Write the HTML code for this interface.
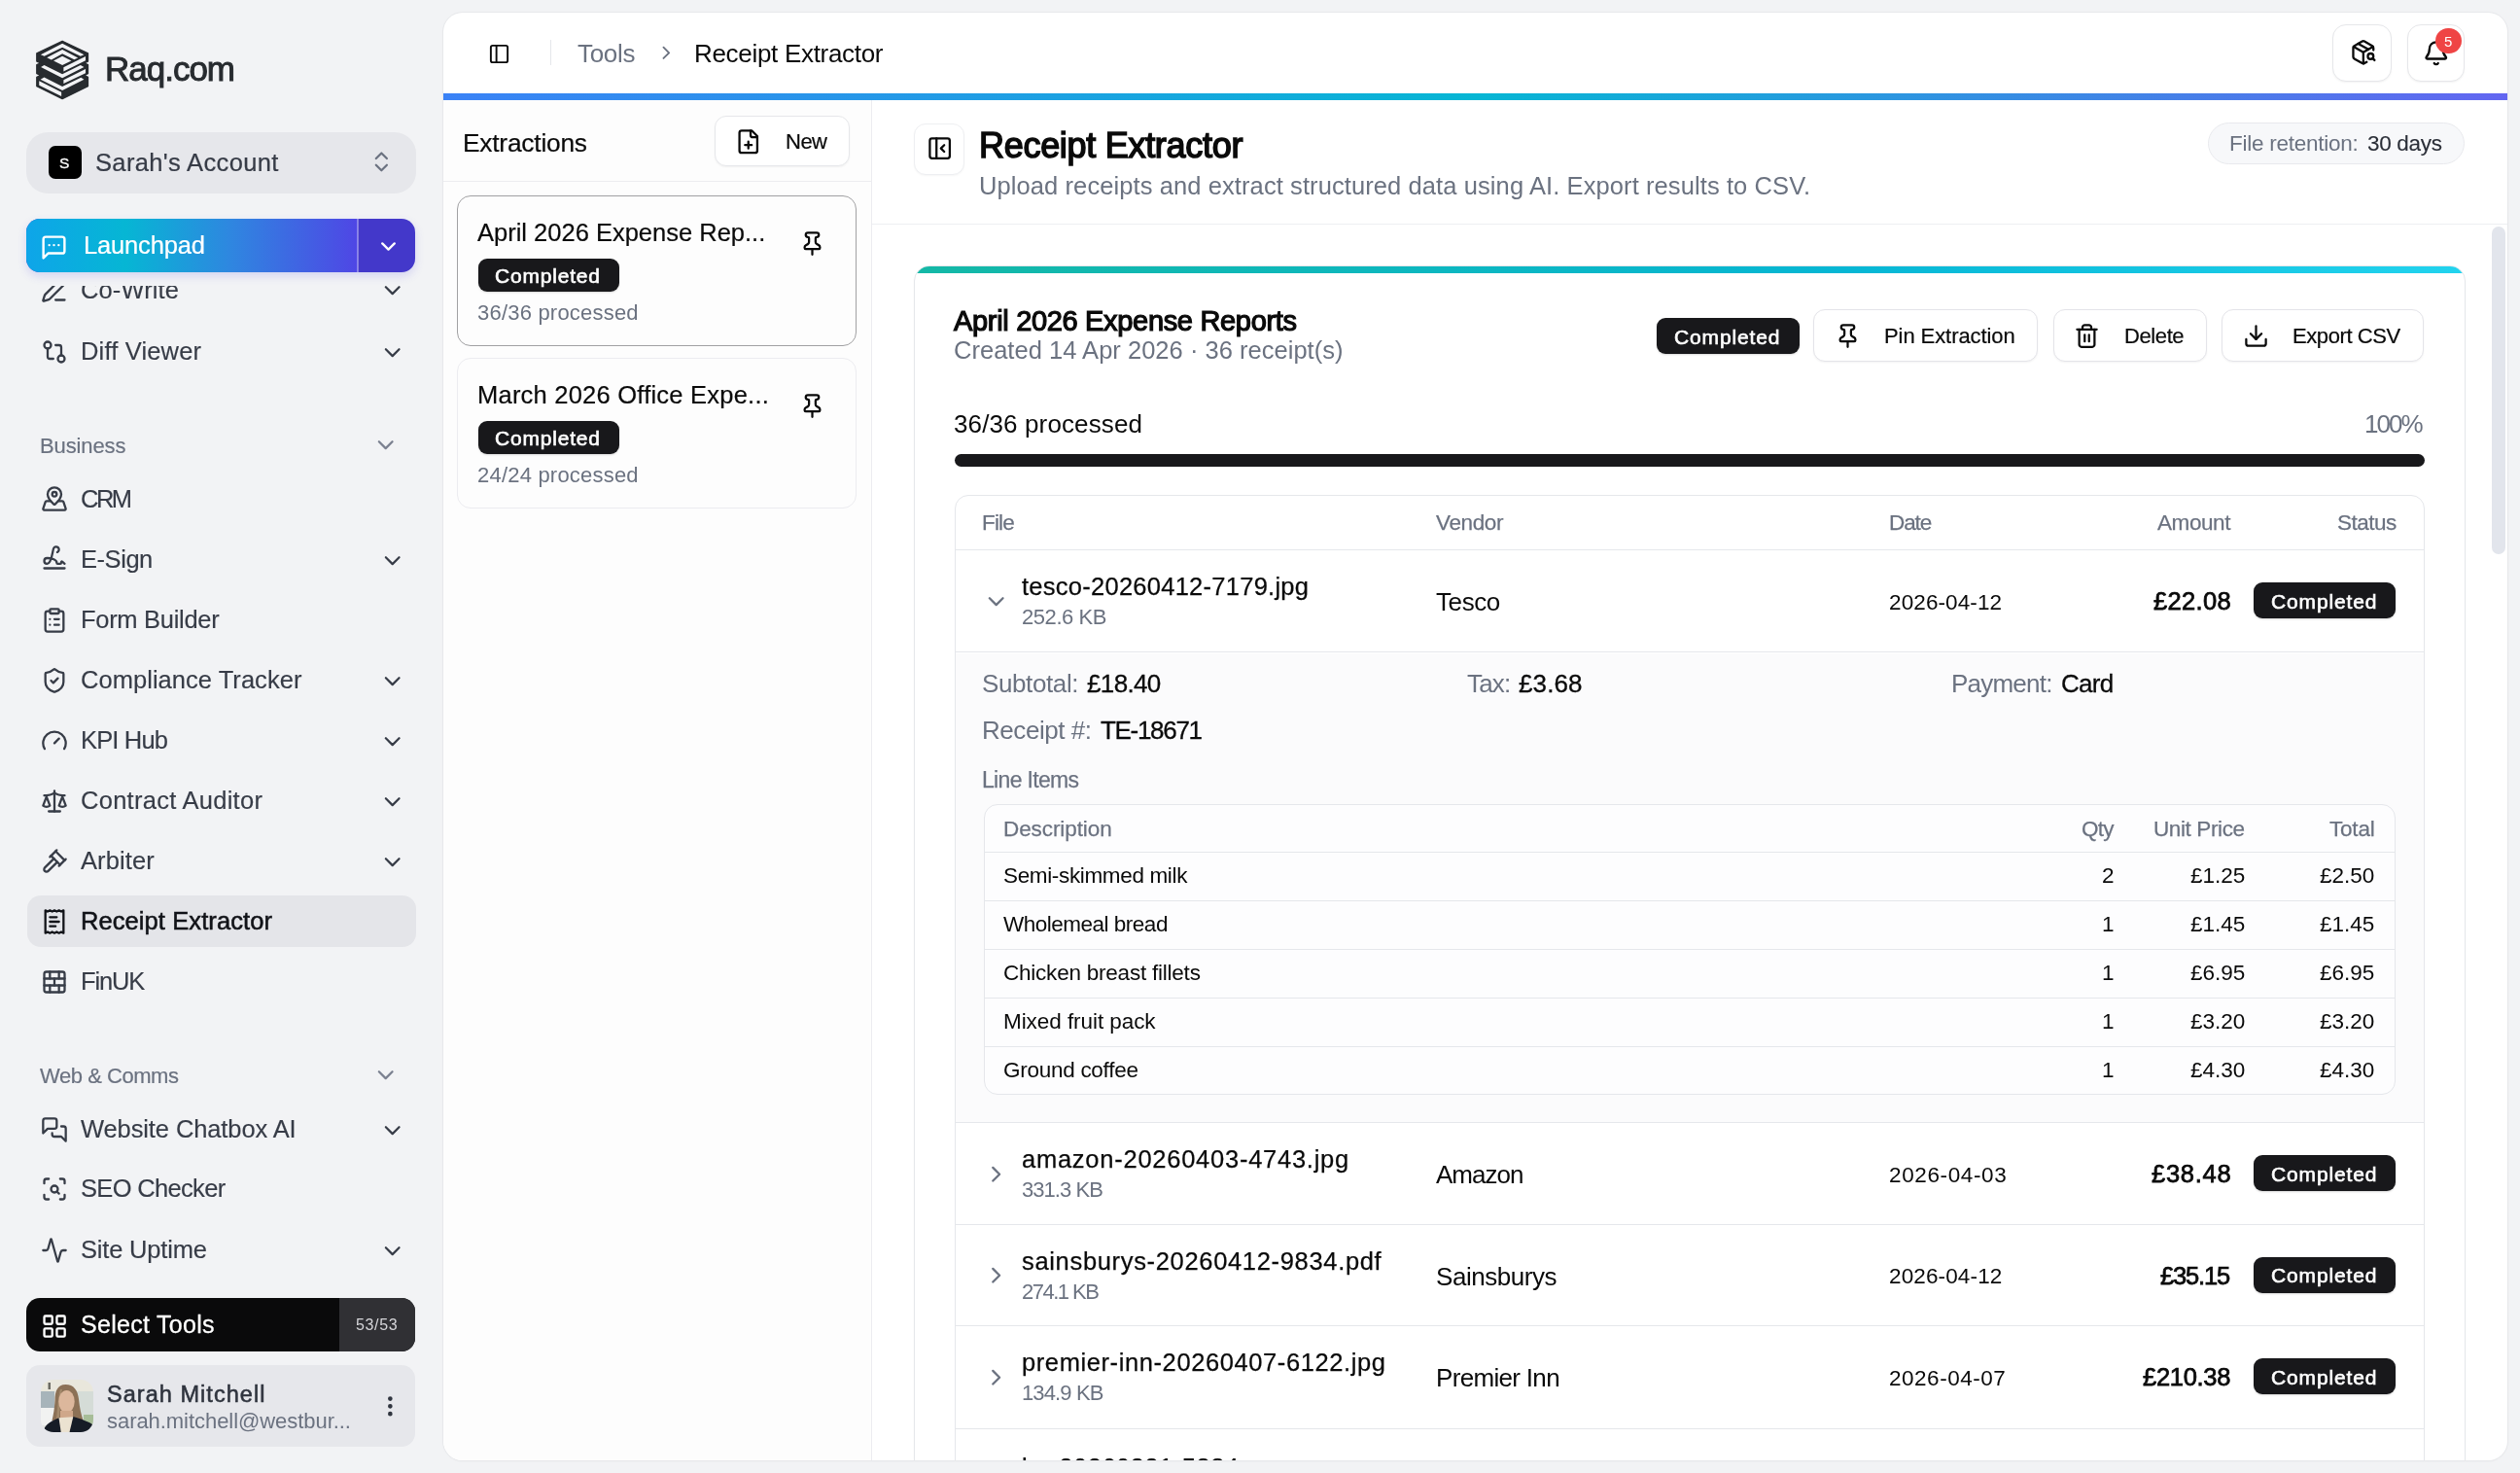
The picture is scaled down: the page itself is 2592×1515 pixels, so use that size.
<!DOCTYPE html>
<html><head><meta charset="utf-8"><title>Receipt Extractor</title>
<style>
html,body{margin:0;padding:0;}
body{width:2592px;height:1515px;overflow:hidden;position:relative;background:#f2f3f5;font-family:"Liberation Sans", sans-serif;}
</style></head><body>
<svg style="position:absolute;left:34px;top:38px" width="60" height="66" viewBox="0 0 1339 1473">
<path fill="#272b2f" stroke="#272b2f" stroke-width="30" stroke-linejoin="round" d="M672 95 L1260 375 L1260 560 L1175 600 L1260 640 L1260 840 L1175 880 L1260 925 L1260 1130 L672 1420 L85 1130 L85 925 L175 880 L85 840 L85 640 L175 600 L85 560 L85 375 Z"/>
<g fill="#f2f3f5">
<path d="M175 405 L672 150 L1170 405 L1088 443 L672 240 L258 443 Z"/>
<path d="M318 472 L672 290 L1030 478 L945 520 L672 385 L420 522 Z"/>
<path d="M470 545 L672 440 L880 545 L672 650 Z"/>
<path d="M700 700 L1205 445 L1205 540 L700 790 Z"/>
<path d="M180 690 L255 645 L672 855 L1090 645 L1170 690 L672 945 Z"/>
<path d="M700 985 L1205 735 L1205 830 L700 1072 Z"/>
<path d="M170 975 L255 925 L672 1140 L1100 930 L1170 975 L672 1230 Z"/>
<path d="M140 1010 L650 1265 L650 1360 L140 1110 Z"/>
</g></svg>
<span id="t0" style="position:absolute;top:52.95px;font-size:35px;line-height:35px;color:#272b2f;white-space:nowrap;will-change:transform;letter-spacing:-1.010px;-webkit-text-stroke:0.95px #272b2f;left:107.80px;">Raq.com</span>
<div style="position:absolute;left:27.00px;top:136.30px;width:400.50px;height:62.90px;background:#e6e7eb;border-radius:22px;"></div>
<div style="position:absolute;left:49.50px;top:150.00px;width:34.30px;height:34.20px;background:#000;border-radius:7px;"></div>
<span id="t1" style="position:absolute;top:159.93px;font-size:15.5px;line-height:15.5px;color:#fff;white-space:nowrap;will-change:transform;-webkit-text-stroke:0.30px #fff;left:61.43px;">S</span>
<span id="t2" style="position:absolute;top:154.93px;font-size:25.5px;line-height:25.5px;color:#373c47;white-space:nowrap;will-change:transform;letter-spacing:0.344px;-webkit-text-stroke:0.22px #373c47;left:98.00px;">Sarah's Account</span>
<svg style="position:absolute;left:378.75px;top:153.35px;" width="26.70" height="26.70" viewBox="0 0 24 24" fill="none" stroke="#6b7280" stroke-width="2" stroke-linecap="round" stroke-linejoin="round"><path d="m7 15 5 5 5-5"/><path d="m7 9 5-5 5 5"/></svg>
<div style="position:absolute;left:27.00px;top:225.00px;width:400.00px;height:55.00px;border-radius:14px;overflow:hidden;box-shadow:0 4px 10px rgba(79,70,229,0.18);background:#4338ca;"><div style="position:absolute;left:0;top:0;width:340.5px;height:55px;background:linear-gradient(90deg,#0ea5e9 0%,#06b6d4 30%,#2f86e0 62%,#4f46e5 100%);"></div><div style="position:absolute;left:340px;top:0;width:1.5px;height:55px;background:rgba(255,255,255,0.35)"></div></div>
<svg style="position:absolute;left:41.00px;top:239.90px;" width="29.00" height="29.00" viewBox="0 0 24 24" fill="none" stroke="#fff" stroke-width="2" stroke-linecap="round" stroke-linejoin="round"><path d="M21 15a2 2 0 0 1-2 2H7l-4 4V5a2 2 0 0 1 2-2h14a2 2 0 0 1 2 2z"/><path d="M8 10h.01"/><path d="M12 10h.01"/><path d="M16 10h.01"/></svg>
<span id="t3" style="position:absolute;top:240.43px;font-size:25.5px;line-height:25.5px;color:#fff;white-space:nowrap;will-change:transform;letter-spacing:-0.152px;-webkit-text-stroke:0.22px #fff;left:86.00px;">Launchpad</span>
<svg style="position:absolute;left:386.50px;top:241.00px;" width="25.00" height="25.00" viewBox="0 0 24 24" fill="none" stroke="#fff" stroke-width="2.2" stroke-linecap="round" stroke-linejoin="round"><path d="m6 9 6 6 6-6"/></svg>
<div style="position:absolute;left:0;top:294px;width:440px;height:1028px;overflow:hidden">
<div style="position:absolute;left:27.70px;top:626.70px;width:400.00px;height:53.30px;background:#e4e5e9;border-radius:14px;"></div>
<svg style="position:absolute;left:42.00px;top:-9.70px;" width="28.00" height="28.00" viewBox="0 0 24 24" fill="none" stroke="#373c47" stroke-width="1.95" stroke-linecap="round" stroke-linejoin="round"><path d="M13 21h8"/><path d="M21.174 6.812a1 1 0 0 0-3.986-3.987L3.842 16.174a2 2 0 0 0-.5.83l-1.321 4.352a.5.5 0 0 0 .623.622l4.353-1.32a2 2 0 0 0 .83-.497z"/></svg>
<span id="t4" style="position:absolute;top:-8.18px;font-size:25.5px;line-height:25.5px;color:#373c47;white-space:nowrap;will-change:transform;letter-spacing:0.125px;-webkit-text-stroke:0.15px #373c47;left:82.80px;">Co-Write</span>
<svg style="position:absolute;left:390.30px;top:-8.60px;" width="27.40" height="27.40" viewBox="0 0 24 24" fill="none" stroke="#373c47" stroke-width="1.95" stroke-linecap="round" stroke-linejoin="round"><path d="m6 9 6 6 6-6"/></svg>
<svg style="position:absolute;left:42.00px;top:53.60px;" width="28.00" height="28.00" viewBox="0 0 24 24" fill="none" stroke="#373c47" stroke-width="1.95" stroke-linecap="round" stroke-linejoin="round"><circle cx="18" cy="18" r="3"/><circle cx="6" cy="6" r="3"/><path d="M13 6h3a2 2 0 0 1 2 2v7"/><path d="M11 18H8a2 2 0 0 1-2-2V9"/></svg>
<span id="t5" style="position:absolute;top:55.12px;font-size:25.5px;line-height:25.5px;color:#373c47;white-space:nowrap;will-change:transform;letter-spacing:0.164px;-webkit-text-stroke:0.15px #373c47;left:82.80px;">Diff Viewer</span>
<svg style="position:absolute;left:390.30px;top:54.70px;" width="27.40" height="27.40" viewBox="0 0 24 24" fill="none" stroke="#373c47" stroke-width="1.95" stroke-linecap="round" stroke-linejoin="round"><path d="m6 9 6 6 6-6"/></svg>
<svg style="position:absolute;left:42.00px;top:205.40px;" width="28.00" height="28.00" viewBox="0 0 24 24" fill="none" stroke="#373c47" stroke-width="1.95" stroke-linecap="round" stroke-linejoin="round"><path d="M18 8c0 3.613-3.869 7.429-5.393 8.795a1 1 0 0 1-1.214 0C9.87 15.429 6 11.613 6 8a6 6 0 0 1 12 0"/><circle cx="12" cy="8" r="2"/><path d="M8.714 14h-3.71a1 1 0 0 0-.948.683l-2.004 6A1 1 0 0 0 3 22h18a1 1 0 0 0 .948-1.316l-2-6a1 1 0 0 0-.949-.684h-3.712"/></svg>
<span id="t6" style="position:absolute;top:206.92px;font-size:25.5px;line-height:25.5px;color:#373c47;white-space:nowrap;will-change:transform;letter-spacing:-2.539px;-webkit-text-stroke:0.15px #373c47;left:82.80px;">CRM</span>
<svg style="position:absolute;left:42.00px;top:265.85px;" width="28.00" height="28.00" viewBox="0 0 24 24" fill="none" stroke="#373c47" stroke-width="1.95" stroke-linecap="round" stroke-linejoin="round"><path d="m21 17-2.156-1.868A.5.5 0 0 0 18 15.5v.5a1 1 0 0 1-1 1h-2a1 1 0 0 1-1-1c0-2.545-3.991-3.97-8.5-4a1 1 0 0 0 0 5c4.153 0 4.745-11.295 5.708-13.5a2.5 2.5 0 1 1 3.31 3.284"/><path d="M3 21h18"/></svg>
<span id="t7" style="position:absolute;top:268.98px;font-size:25.5px;line-height:25.5px;color:#373c47;white-space:nowrap;will-change:transform;letter-spacing:-0.449px;-webkit-text-stroke:0.15px #373c47;left:82.80px;">E-Sign</span>
<svg style="position:absolute;left:390.30px;top:268.55px;" width="27.40" height="27.40" viewBox="0 0 24 24" fill="none" stroke="#373c47" stroke-width="1.95" stroke-linecap="round" stroke-linejoin="round"><path d="m6 9 6 6 6-6"/></svg>
<svg style="position:absolute;left:42.00px;top:329.50px;" width="28.00" height="28.00" viewBox="0 0 24 24" fill="none" stroke="#373c47" stroke-width="1.95" stroke-linecap="round" stroke-linejoin="round"><rect width="8" height="4" x="8" y="2" rx="1" ry="1"/><path d="M16 4h2a2 2 0 0 1 2 2v14a2 2 0 0 1-2 2H6a2 2 0 0 1-2-2V6a2 2 0 0 1 2-2h2"/><path d="M12 11h4"/><path d="M12 16h4"/><path d="M8 11h.01"/><path d="M8 16h.01"/></svg>
<span id="t8" style="position:absolute;top:331.03px;font-size:25.5px;line-height:25.5px;color:#373c47;white-space:nowrap;will-change:transform;letter-spacing:-0.296px;-webkit-text-stroke:0.15px #373c47;left:82.80px;">Form Builder</span>
<svg style="position:absolute;left:42.00px;top:391.55px;" width="28.00" height="28.00" viewBox="0 0 24 24" fill="none" stroke="#373c47" stroke-width="1.95" stroke-linecap="round" stroke-linejoin="round"><path d="M20 13c0 5-3.5 7.5-7.66 8.95a1 1 0 0 1-.67-.01C7.5 20.5 4 18 4 13V6a1 1 0 0 1 1-1c2 0 4.5-1.2 6.24-2.72a1.17 1.17 0 0 1 1.52 0C14.51 3.81 17 5 19 5a1 1 0 0 1 1 1z"/><path d="m9 12 2 2 4-4"/></svg>
<span id="t9" style="position:absolute;top:393.08px;font-size:25.5px;line-height:25.5px;color:#373c47;white-space:nowrap;will-change:transform;letter-spacing:0.038px;-webkit-text-stroke:0.15px #373c47;left:82.80px;">Compliance Tracker</span>
<svg style="position:absolute;left:390.30px;top:392.65px;" width="27.40" height="27.40" viewBox="0 0 24 24" fill="none" stroke="#373c47" stroke-width="1.95" stroke-linecap="round" stroke-linejoin="round"><path d="m6 9 6 6 6-6"/></svg>
<svg style="position:absolute;left:42.00px;top:453.60px;" width="28.00" height="28.00" viewBox="0 0 24 24" fill="none" stroke="#373c47" stroke-width="1.95" stroke-linecap="round" stroke-linejoin="round"><path d="m12 14 4-4"/><path d="M3.34 19a10 10 0 1 1 17.32 0"/></svg>
<span id="t10" style="position:absolute;top:455.13px;font-size:25.5px;line-height:25.5px;color:#373c47;white-space:nowrap;will-change:transform;letter-spacing:-0.828px;-webkit-text-stroke:0.15px #373c47;left:82.80px;">KPI Hub</span>
<svg style="position:absolute;left:390.30px;top:454.70px;" width="27.40" height="27.40" viewBox="0 0 24 24" fill="none" stroke="#373c47" stroke-width="1.95" stroke-linecap="round" stroke-linejoin="round"><path d="m6 9 6 6 6-6"/></svg>
<svg style="position:absolute;left:42.00px;top:515.65px;" width="28.00" height="28.00" viewBox="0 0 24 24" fill="none" stroke="#373c47" stroke-width="1.95" stroke-linecap="round" stroke-linejoin="round"><path d="m16 16 3-8 3 8c-.87.65-1.92 1-3 1s-2.13-.35-3-1Z"/><path d="m2 16 3-8 3 8c-.87.65-1.92 1-3 1s-2.130-.35-3-1Z"/><path d="M7 21h10"/><path d="M12 3v18"/><path d="M3 7h2c2 0 5-1 7-2 2 1 5 2 7 2h2"/></svg>
<span id="t11" style="position:absolute;top:517.17px;font-size:25.5px;line-height:25.5px;color:#373c47;white-space:nowrap;will-change:transform;letter-spacing:0.269px;-webkit-text-stroke:0.15px #373c47;left:82.80px;">Contract Auditor</span>
<svg style="position:absolute;left:390.30px;top:516.75px;" width="27.40" height="27.40" viewBox="0 0 24 24" fill="none" stroke="#373c47" stroke-width="1.95" stroke-linecap="round" stroke-linejoin="round"><path d="m6 9 6 6 6-6"/></svg>
<svg style="position:absolute;left:42.00px;top:577.70px;" width="28.00" height="28.00" viewBox="0 0 24 24" fill="none" stroke="#373c47" stroke-width="1.95" stroke-linecap="round" stroke-linejoin="round"><path d="m14.5 12.5-8 8a2.119 2.119 0 1 1-3-3l8-8"/><path d="m16 16 6-6"/><path d="m8 8 6-6"/><path d="m9 7 8 8"/><path d="m21 11-8-8"/></svg>
<span id="t12" style="position:absolute;top:579.23px;font-size:25.5px;line-height:25.5px;color:#373c47;white-space:nowrap;will-change:transform;letter-spacing:0.098px;-webkit-text-stroke:0.15px #373c47;left:82.80px;">Arbiter</span>
<svg style="position:absolute;left:390.30px;top:578.80px;" width="27.40" height="27.40" viewBox="0 0 24 24" fill="none" stroke="#373c47" stroke-width="1.95" stroke-linecap="round" stroke-linejoin="round"><path d="m6 9 6 6 6-6"/></svg>
<svg style="position:absolute;left:42.00px;top:639.75px;" width="28.00" height="28.00" viewBox="0 0 24 24" fill="none" stroke="#111318" stroke-width="1.95" stroke-linecap="round" stroke-linejoin="round"><path d="M4 2v20l2-1 2 1 2-1 2 1 2-1 2 1 2-1 2 1V2l-2 1-2-1-2 1-2-1-2 1-2-1-2 1Z"/><path d="M14 8H8"/><path d="M16 12H8"/><path d="M13 16H8"/></svg>
<span id="t13" style="position:absolute;top:641.27px;font-size:25.5px;line-height:25.5px;color:#111318;white-space:nowrap;will-change:transform;letter-spacing:0.083px;-webkit-text-stroke:0.55px #111318;left:82.80px;">Receipt Extractor</span>
<svg style="position:absolute;left:42.00px;top:701.80px;" width="28.00" height="28.00" viewBox="0 0 24 24" fill="none" stroke="#373c47" stroke-width="1.95" stroke-linecap="round" stroke-linejoin="round"><rect width="18" height="18" x="3" y="3" rx="2"/><path d="M12 9v6"/><path d="M16 15v6"/><path d="M16 3v6"/><path d="M3 15h18"/><path d="M3 9h18"/><path d="M8 15v6"/><path d="M8 3v6"/></svg>
<span id="t14" style="position:absolute;top:703.33px;font-size:25.5px;line-height:25.5px;color:#373c47;white-space:nowrap;will-change:transform;letter-spacing:-1.140px;-webkit-text-stroke:0.15px #373c47;left:82.80px;">FinUK</span>
<svg style="position:absolute;left:42.00px;top:853.80px;" width="28.00" height="28.00" viewBox="0 0 24 24" fill="none" stroke="#373c47" stroke-width="1.95" stroke-linecap="round" stroke-linejoin="round"><path d="M14 9a2 2 0 0 1-2 2H6l-4 4V4a2 2 0 0 1 2-2h8a2 2 0 0 1 2 2z"/><path d="M18 9h2a2 2 0 0 1 2 2v11l-4-4h-6a2 2 0 0 1-2-2v-1"/></svg>
<span id="t15" style="position:absolute;top:855.33px;font-size:25.5px;line-height:25.5px;color:#373c47;white-space:nowrap;will-change:transform;letter-spacing:-0.106px;-webkit-text-stroke:0.15px #373c47;left:82.80px;">Website Chatbox AI</span>
<svg style="position:absolute;left:390.30px;top:854.90px;" width="27.40" height="27.40" viewBox="0 0 24 24" fill="none" stroke="#373c47" stroke-width="1.95" stroke-linecap="round" stroke-linejoin="round"><path d="m6 9 6 6 6-6"/></svg>
<svg style="position:absolute;left:42.00px;top:914.80px;" width="28.00" height="28.00" viewBox="0 0 24 24" fill="none" stroke="#373c47" stroke-width="1.95" stroke-linecap="round" stroke-linejoin="round"><path d="M3 7V5a2 2 0 0 1 2-2h2"/><path d="M17 3h2a2 2 0 0 1 2 2v2"/><path d="M21 17v2a2 2 0 0 1-2 2h-2"/><path d="M7 21H5a2 2 0 0 1-2-2v-2"/><circle cx="12" cy="12" r="3"/><path d="m16 16-1.9-1.9"/></svg>
<span id="t16" style="position:absolute;top:916.33px;font-size:25.5px;line-height:25.5px;color:#373c47;white-space:nowrap;will-change:transform;letter-spacing:-0.669px;-webkit-text-stroke:0.15px #373c47;left:82.80px;">SEO Checker</span>
<svg style="position:absolute;left:42.00px;top:977.70px;" width="28.00" height="28.00" viewBox="0 0 24 24" fill="none" stroke="#373c47" stroke-width="1.95" stroke-linecap="round" stroke-linejoin="round"><path d="M22 12h-2.48a2 2 0 0 0-1.93 1.46l-2.35 8.36a.25.25 0 0 1-.48 0L9.24 2.18a.25.25 0 0 0-.48 0l-2.35 8.36A2 2 0 0 1 4.49 12H2"/></svg>
<span id="t17" style="position:absolute;top:979.22px;font-size:25.5px;line-height:25.5px;color:#373c47;white-space:nowrap;will-change:transform;letter-spacing:-0.190px;-webkit-text-stroke:0.15px #373c47;left:82.80px;">Site Uptime</span>
<svg style="position:absolute;left:390.30px;top:978.80px;" width="27.40" height="27.40" viewBox="0 0 24 24" fill="none" stroke="#373c47" stroke-width="1.95" stroke-linecap="round" stroke-linejoin="round"><path d="m6 9 6 6 6-6"/></svg>
<span id="t18" style="position:absolute;top:153.70px;font-size:22px;line-height:22px;color:#6b7280;white-space:nowrap;will-change:transform;letter-spacing:-0.126px;-webkit-text-stroke:0.20px #6b7280;left:41.00px;">Business</span>
<svg style="position:absolute;left:382.80px;top:149.80px;" width="27.40" height="27.40" viewBox="0 0 24 24" fill="none" stroke="#7b8190" stroke-width="2" stroke-linecap="round" stroke-linejoin="round"><path d="m6 9 6 6 6-6"/></svg>
<span id="t19" style="position:absolute;top:801.80px;font-size:22px;line-height:22px;color:#6b7280;white-space:nowrap;will-change:transform;letter-spacing:-0.452px;-webkit-text-stroke:0.20px #6b7280;left:41.00px;">Web &amp; Comms</span>
<svg style="position:absolute;left:382.80px;top:797.90px;" width="27.40" height="27.40" viewBox="0 0 24 24" fill="none" stroke="#7b8190" stroke-width="2" stroke-linecap="round" stroke-linejoin="round"><path d="m6 9 6 6 6-6"/></svg>
</div>
<div style="position:absolute;left:27.00px;top:1335.00px;width:400.20px;height:55.20px;background:#0a0a0b;border-radius:14px;overflow:hidden;"><div style="position:absolute;left:322px;top:0;width:80px;height:56px;background:#303034"></div></div>
<svg style="position:absolute;left:41.65px;top:1349.50px;" width="28.20" height="28.20" viewBox="0 0 24 24" fill="none" stroke="#fff" stroke-width="2" stroke-linecap="round" stroke-linejoin="round"><rect width="7" height="7" x="3" y="3" rx="1"/><rect width="7" height="7" x="14" y="3" rx="1"/><rect width="7" height="7" x="14" y="14" rx="1"/><rect width="7" height="7" x="3" y="14" rx="1"/></svg>
<span id="t20" style="position:absolute;top:1350.15px;font-size:25px;line-height:25px;color:#fff;white-space:nowrap;will-change:transform;letter-spacing:0.296px;-webkit-text-stroke:0.30px #fff;left:82.50px;">Select Tools</span>
<span id="t21" style="position:absolute;top:1355.40px;font-size:16px;line-height:16px;color:#d4d4d8;white-space:nowrap;will-change:transform;letter-spacing:0.638px;left:365.80px;">53/53</span>
<div style="position:absolute;left:27.00px;top:1404.30px;width:400.20px;height:83.50px;background:#e6e7eb;border-radius:14px;"></div>
<svg style="position:absolute;left:42px;top:1419px" width="54" height="54" viewBox="0 0 54 54">
<defs><clipPath id="av"><rect width="54" height="54" rx="13"/></clipPath><filter id="bl" x="-10%" y="-10%" width="120%" height="120%"><feGaussianBlur stdDeviation="0.7"/></filter></defs>
<g clip-path="url(#av)"><g filter="url(#bl)">
<rect x="-2" y="-2" width="58" height="58" fill="#e4e6e2"/>
<rect x="-2" y="-2" width="58" height="14" fill="#e9e7dc"/>
<rect x="-2" y="12" width="16" height="17" fill="#a7b4ba"/>
<rect x="-2" y="29" width="16" height="18" fill="#f1f2f1"/>
<rect x="36" y="12" width="20" height="34" fill="#d5dcd7"/>
<rect x="44" y="36" width="12" height="12" fill="#a7bd98"/>
<rect x="7.5" y="3" width="2.5" height="7" fill="#6a6a64"/>
<path d="M25.5 5 C17 5 14.5 12 14.5 21 C14 30 13 36 11.5 42 L22 42 L33 42 L43.5 42 C41.5 36 40 29 39 20 C38 11 34 5 25.5 5 Z" fill="#8c7157"/>
<path d="M20 10 C18 16 17.5 28 16 40 L19 40 C19.5 30 20 18 22 10 Z" fill="#a48a6c"/>
<ellipse cx="26.5" cy="22.5" rx="8.2" ry="11.5" fill="#dcb79c"/>
<rect x="20" y="32" width="13" height="9" fill="#cfa78a"/>
<path d="M2 56 C3 47 8 44 18.5 39.3 L24 52 L33.3 38 C42 41 50 43 54 47 L56 56 Z" fill="#161a26"/>
<path d="M18.5 39.3 L33.3 38.3 L29 56 L21 56 Z" fill="#ebe2d1"/>
</g></g></svg>
<span id="t22" style="position:absolute;top:1422.83px;font-size:23.5px;line-height:23.5px;color:#2f343e;white-space:nowrap;will-change:transform;letter-spacing:1.038px;-webkit-text-stroke:0.55px #2f343e;left:109.80px;">Sarah Mitchell</span>
<span id="t23" style="position:absolute;top:1451.10px;font-size:22px;line-height:22px;color:#6b7280;white-space:nowrap;will-change:transform;letter-spacing:-0.051px;left:109.80px;">sarah.mitchell@westbur...</span>
<svg style="position:absolute;left:387.65px;top:1432.95px;" width="26.70" height="26.70" viewBox="0 0 24 24" fill="none" stroke="#2f343e" stroke-width="2.2" stroke-linecap="round" stroke-linejoin="round"><circle cx="12" cy="12" r="1"/><circle cx="12" cy="5" r="1"/><circle cx="12" cy="19" r="1"/></svg>
<div style="position:absolute;left:456px;top:13px;width:2122.5px;height:1488.5px;background:#fff;border-radius:20px;overflow:hidden;box-shadow:0 0 0 1px #e7e8eb, 0 1px 3px rgba(0,0,0,0.04)">
<svg style="position:absolute;left:46.20px;top:30.50px;" width="23.00" height="23.00" viewBox="0 0 24 24" fill="none" stroke="#0a0a0a" stroke-width="2" stroke-linecap="round" stroke-linejoin="round"><rect width="18" height="18" x="3" y="3" rx="2"/><path d="M9 3v18"/></svg>
<div style="position:absolute;left:109.50px;top:28.00px;width:1.50px;height:26.00px;background:#e5e7eb;"></div>
<span id="t24" style="position:absolute;top:29.00px;font-size:26px;line-height:26px;color:#6b7280;white-space:nowrap;will-change:transform;letter-spacing:-0.301px;left:138.30px;">Tools</span>
<svg style="position:absolute;left:218.20px;top:30.10px;" width="22.60" height="22.60" viewBox="0 0 24 24" fill="none" stroke="#6b7280" stroke-width="2" stroke-linecap="round" stroke-linejoin="round"><path d="m9 18 6-6-6-6"/></svg>
<span id="t25" style="position:absolute;top:29.00px;font-size:26px;line-height:26px;color:#0a0a0a;white-space:nowrap;will-change:transform;letter-spacing:-0.307px;left:258.30px;">Receipt Extractor</span>
<div style="position:absolute;left:1943.00px;top:11.50px;width:61.30px;height:59.90px;background:#fff;border:1px solid #e6e7ea;border-radius:14px;box-sizing:border-box;box-shadow:0 1px 2px rgba(0,0,0,0.05);"></div>
<div style="position:absolute;left:2019.70px;top:11.50px;width:59.70px;height:59.90px;background:#fff;border:1px solid #e6e7ea;border-radius:14px;box-sizing:border-box;box-shadow:0 1px 2px rgba(0,0,0,0.05);"></div>
<svg style="position:absolute;left:1961.05px;top:27.35px;" width="27.70" height="27.70" viewBox="0 0 24 24" fill="none" stroke="#0a0a0a" stroke-width="2" stroke-linecap="round" stroke-linejoin="round"><path d="M21 10V8a2 2 0 0 0-1-1.73l-7-4a2 2 0 0 0-2 0l-7 4A2 2 0 0 0 3 8v8a2 2 0 0 0 1 1.73l7 4a2 2 0 0 0 2 0l2-1.14"/><path d="m7.5 4.27 9 5.15"/><polyline points="3.29 7 12 12 20.71 7"/><line x1="12" x2="12" y1="22" y2="12"/><circle cx="18.5" cy="15.5" r="2.5"/><path d="M20.27 17.27 22 19"/></svg>
<svg style="position:absolute;left:2035.75px;top:27.75px;" width="27.50" height="27.50" viewBox="0 0 24 24" fill="none" stroke="#0a0a0a" stroke-width="2" stroke-linecap="round" stroke-linejoin="round"><path d="M10.268 21a2 2 0 0 0 3.464 0"/><path d="M3.262 15.326A1 1 0 0 0 4 17h16a1 1 0 0 0 .74-1.673C19.41 13.956 18 12.499 18 8A6 6 0 0 0 6 8c0 4.499-1.411 5.956-2.738 7.326"/></svg>
<div style="position:absolute;left:2049.30px;top:15.60px;width:26.70px;height:26.70px;background:#ef4444;border-radius:50%;"></div>
<span id="t26" style="position:absolute;top:22.35px;font-size:15px;line-height:15px;color:#fff;white-space:nowrap;will-change:transform;left:2058.23px;">5</span>
<div style="position:absolute;left:0.00px;top:83.00px;width:2122.50px;height:7.00px;background:linear-gradient(90deg,#3b82f6 0%,#06b6d4 50%,#6366f1 100%);"></div>
<div style="position:absolute;left:0.00px;top:90.00px;width:440.50px;height:1398.50px;background:#fdfdfd;border-right:1px solid #ececf0;box-sizing:border-box;"></div>
<div style="position:absolute;left:0.00px;top:173px;width:440.00px;height:1px;background:#ececf0"></div>
<span id="t27" style="position:absolute;top:120.85px;font-size:26.3px;line-height:26.3px;color:#0a0a0a;white-space:nowrap;will-change:transform;letter-spacing:-0.208px;-webkit-text-stroke:0.22px #0a0a0a;left:19.80px;">Extractions</span>
<div style="position:absolute;left:278.60px;top:106.20px;width:139.00px;height:52.30px;background:#fff;border:1px solid #e6e7ea;border-radius:12px;box-sizing:border-box;box-shadow:0 1px 2px rgba(0,0,0,0.05);"></div>
<svg style="position:absolute;left:299.95px;top:118.75px;" width="27.50" height="27.50" viewBox="0 0 24 24" fill="none" stroke="#0a0a0a" stroke-width="2" stroke-linecap="round" stroke-linejoin="round"><path d="M15 2H6a2 2 0 0 0-2 2v16a2 2 0 0 0 2 2h12a2 2 0 0 0 2-2V7Z"/><path d="M14 2v4a2 2 0 0 0 2 2h4"/><path d="M9 15h6"/><path d="M12 18v-6"/></svg>
<span id="t28" style="position:absolute;top:122.30px;font-size:22px;line-height:22px;color:#0a0a0a;white-space:nowrap;will-change:transform;letter-spacing:-0.508px;-webkit-text-stroke:0.22px #0a0a0a;left:351.60px;">New</span>
<div style="position:absolute;left:14.20px;top:188.20px;width:411.00px;height:155.10px;background:#fdfdfd;border:1.5px solid #a1a1a3;border-radius:14px;box-sizing:border-box;"></div>
<span id="t29" style="position:absolute;top:214.32px;font-size:25.5px;line-height:25.5px;color:#0a0a0a;white-space:nowrap;will-change:transform;letter-spacing:0.001px;-webkit-text-stroke:0.20px #0a0a0a;left:35.10px;">April 2026 Expense Rep...</span>
<svg style="position:absolute;left:366.25px;top:224.45px;" width="27.00" height="27.00" viewBox="0 0 24 24" fill="none" stroke="#0a0a0a" stroke-width="2" stroke-linecap="round" stroke-linejoin="round"><path d="M12 17v5"/><path d="M9 10.76a2 2 0 0 1-1.11 1.79l-1.78.9A2 2 0 0 0 5 15.24V16a1 1 0 0 0 1 1h12a1 1 0 0 0 1-1v-.76a2 2 0 0 0-1.11-1.79l-1.78-.9A2 2 0 0 1 15 10.76V7a1 1 0 0 1 1-1 2 2 0 0 0 0-4H8a2 2 0 0 0 0 4 1 1 0 0 1 1 1z"/></svg>
<div style="position:absolute;left:36.30px;top:253.00px;width:144.70px;height:33.80px;background:#18181b;border-radius:9px;box-shadow:0 1px 2px rgba(0,0,0,0.15);"></div>
<span id="t30" style="position:absolute;top:259.75px;font-size:21px;line-height:21px;color:#fff;white-space:nowrap;will-change:transform;letter-spacing:0.805px;-webkit-text-stroke:0.62px #fff;left:53.40px;">Completed</span>
<span id="t31" style="position:absolute;top:298.10px;font-size:22px;line-height:22px;color:#6b7280;white-space:nowrap;will-change:transform;letter-spacing:0.209px;left:35.10px;">36/36 processed</span>
<div style="position:absolute;left:14.20px;top:355.20px;width:411.00px;height:154.40px;background:#fdfdfd;border:1px solid #ececf0;border-radius:14px;box-sizing:border-box;"></div>
<span id="t32" style="position:absolute;top:381.32px;font-size:25.5px;line-height:25.5px;color:#0a0a0a;white-space:nowrap;will-change:transform;letter-spacing:0.227px;-webkit-text-stroke:0.20px #0a0a0a;left:35.10px;">March 2026 Office Expe...</span>
<svg style="position:absolute;left:366.25px;top:391.45px;" width="27.00" height="27.00" viewBox="0 0 24 24" fill="none" stroke="#0a0a0a" stroke-width="2" stroke-linecap="round" stroke-linejoin="round"><path d="M12 17v5"/><path d="M9 10.76a2 2 0 0 1-1.11 1.79l-1.78.9A2 2 0 0 0 5 15.24V16a1 1 0 0 0 1 1h12a1 1 0 0 0 1-1v-.76a2 2 0 0 0-1.11-1.79l-1.78-.9A2 2 0 0 1 15 10.76V7a1 1 0 0 1 1-1 2 2 0 0 0 0-4H8a2 2 0 0 0 0 4 1 1 0 0 1 1 1z"/></svg>
<div style="position:absolute;left:36.30px;top:420.00px;width:144.70px;height:33.80px;background:#18181b;border-radius:9px;box-shadow:0 1px 2px rgba(0,0,0,0.15);"></div>
<span id="t33" style="position:absolute;top:426.75px;font-size:21px;line-height:21px;color:#fff;white-space:nowrap;will-change:transform;letter-spacing:0.805px;-webkit-text-stroke:0.62px #fff;left:53.40px;">Completed</span>
<span id="t34" style="position:absolute;top:465.10px;font-size:22px;line-height:22px;color:#6b7280;white-space:nowrap;will-change:transform;letter-spacing:0.209px;left:35.10px;">24/24 processed</span>
<div style="position:absolute;left:484.00px;top:114.00px;width:51.90px;height:53.30px;background:#fff;border:1px solid #eeeff2;border-radius:12px;box-sizing:border-box;box-shadow:0 1px 2px rgba(0,0,0,0.04);"></div>
<svg style="position:absolute;left:496.70px;top:126.45px;" width="27.30" height="27.30" viewBox="0 0 24 24" fill="none" stroke="#0a0a0a" stroke-width="2" stroke-linecap="round" stroke-linejoin="round"><rect width="18" height="18" x="3" y="3" rx="2"/><path d="M9 3v18"/><path d="m16 15-3-3 3-3"/></svg>
<span id="t35" style="position:absolute;top:119.20px;font-size:36px;line-height:36px;color:#0a0a0a;white-space:nowrap;will-change:transform;letter-spacing:-0.294px;-webkit-text-stroke:1.51px #0a0a0a;left:550.80px;">Receipt Extractor</span>
<span id="t36" style="position:absolute;top:166.12px;font-size:25.5px;line-height:25.5px;color:#6b7280;white-space:nowrap;will-change:transform;letter-spacing:0.092px;left:550.80px;">Upload receipts and extract structured data using AI. Export results to CSV.</span>
<div style="position:absolute;left:1815.20px;top:113.30px;width:264.20px;height:42.80px;background:#f7f8fa;border:1px solid #e8e9ed;border-radius:22px;box-sizing:border-box;"></div>
<span id="t37" style="position:absolute;top:123.67px;font-size:22.5px;line-height:22.5px;color:#6b7280;white-space:nowrap;will-change:transform;letter-spacing:-0.252px;left:1837.30px;">File retention:</span>
<span id="t38" style="position:absolute;top:123.67px;font-size:22.5px;line-height:22.5px;color:#2b2f38;white-space:nowrap;will-change:transform;letter-spacing:-0.302px;-webkit-text-stroke:0.12px #2b2f38;left:1979.30px;">30 days</span>
<div style="position:absolute;left:440.50px;top:217px;width:1682.00px;height:1px;background:#eeeff2"></div>
<div style="position:absolute;left:2107.20px;top:219.80px;width:13.80px;height:337.60px;background:#e2e5ec;border-radius:7px;"></div>
<div style="position:absolute;left:483.5px;top:259.6px;width:1596.5px;height:1400px;border:1px solid #e5e7eb;box-sizing:border-box;border-radius:16px;overflow:hidden;background:#fff;box-shadow:0 1px 2px rgba(0,0,0,0.04)"><div style="position:absolute;left:0;top:-1px;width:100%;height:8.6px;background:linear-gradient(90deg,#14b8a6 0%,#06b6d4 60%,#22d3ee 100%)"></div></div>
<span id="t39" style="position:absolute;top:302.55px;font-size:29px;line-height:29px;color:#0a0a0a;white-space:nowrap;will-change:transform;letter-spacing:-0.324px;-webkit-text-stroke:1.22px #0a0a0a;left:524.80px;">April 2026 Expense Reports</span>
<span id="t40" style="position:absolute;top:334.73px;font-size:25.5px;line-height:25.5px;color:#6b7280;white-space:nowrap;will-change:transform;letter-spacing:0.023px;left:524.80px;">Created 14 Apr 2026 · 36 receipt(s)</span>
<div style="position:absolute;left:1248.20px;top:314.20px;width:146.60px;height:36.60px;background:#18181b;border-radius:9px;box-shadow:0 1px 2px rgba(0,0,0,0.15);"></div>
<span id="t41" style="position:absolute;top:322.95px;font-size:21px;line-height:21px;color:#fff;white-space:nowrap;will-change:transform;letter-spacing:0.855px;-webkit-text-stroke:0.62px #fff;left:1266.10px;">Completed</span>
<div style="position:absolute;left:1409.30px;top:305.30px;width:230.50px;height:53.70px;background:#fff;border:1px solid #e4e4e9;border-radius:12px;box-sizing:border-box;box-shadow:0 1px 2px rgba(0,0,0,0.05);"></div>
<svg style="position:absolute;left:1431.35px;top:318.75px;" width="27.00" height="27.00" viewBox="0 0 24 24" fill="none" stroke="#0a0a0a" stroke-width="2" stroke-linecap="round" stroke-linejoin="round"><path d="M12 17v5"/><path d="M9 10.76a2 2 0 0 1-1.11 1.79l-1.78.9A2 2 0 0 0 5 15.24V16a1 1 0 0 0 1 1h12a1 1 0 0 0 1-1v-.76a2 2 0 0 0-1.11-1.79l-1.78-.9A2 2 0 0 1 15 10.76V7a1 1 0 0 1 1-1 2 2 0 0 0 0-4H8a2 2 0 0 0 0 4 1 1 0 0 1 1 1z"/></svg>
<span id="t42" style="position:absolute;top:322.10px;font-size:22px;line-height:22px;color:#0a0a0a;white-space:nowrap;will-change:transform;letter-spacing:-0.080px;-webkit-text-stroke:0.22px #0a0a0a;left:1482.30px;">Pin Extraction</span>
<div style="position:absolute;left:1655.70px;top:305.30px;width:158.60px;height:53.70px;background:#fff;border:1px solid #e4e4e9;border-radius:12px;box-sizing:border-box;box-shadow:0 1px 2px rgba(0,0,0,0.05);"></div>
<svg style="position:absolute;left:1677.15px;top:318.80px;" width="27.00" height="27.00" viewBox="0 0 24 24" fill="none" stroke="#0a0a0a" stroke-width="2" stroke-linecap="round" stroke-linejoin="round"><path d="M3 6h18"/><path d="M19 6v14c0 1-1 2-2 2H7c-1 0-2-1-2-2V6"/><path d="M8 6V4c0-1 1-2 2-2h4c1 0 2 1 2 2v2"/><line x1="10" x2="10" y1="11" y2="17"/><line x1="14" x2="14" y1="11" y2="17"/></svg>
<span id="t43" style="position:absolute;top:322.10px;font-size:22px;line-height:22px;color:#0a0a0a;white-space:nowrap;will-change:transform;letter-spacing:-0.399px;-webkit-text-stroke:0.22px #0a0a0a;left:1729.00px;">Delete</span>
<div style="position:absolute;left:1829.00px;top:305.30px;width:208.00px;height:53.70px;background:#fff;border:1px solid #e4e4e9;border-radius:12px;box-sizing:border-box;box-shadow:0 1px 2px rgba(0,0,0,0.05);"></div>
<svg style="position:absolute;left:1851.10px;top:318.95px;" width="27.00" height="27.00" viewBox="0 0 24 24" fill="none" stroke="#0a0a0a" stroke-width="2" stroke-linecap="round" stroke-linejoin="round"><path d="M21 15v4a2 2 0 0 1-2 2H5a2 2 0 0 1-2-2v-4"/><polyline points="7 10 12 15 17 10"/><line x1="12" x2="12" y1="15" y2="3"/></svg>
<span id="t44" style="position:absolute;top:322.10px;font-size:22px;line-height:22px;color:#0a0a0a;white-space:nowrap;will-change:transform;letter-spacing:-0.404px;-webkit-text-stroke:0.22px #0a0a0a;left:1902.30px;">Export CSV</span>
<span id="t45" style="position:absolute;top:409.70px;font-size:26px;line-height:26px;color:#0a0a0a;white-space:nowrap;will-change:transform;letter-spacing:0.125px;left:524.80px;">36/36 processed</span>
<span id="t46" style="position:absolute;top:410.20px;font-size:26px;line-height:26px;color:#6b7280;white-space:nowrap;will-change:transform;letter-spacing:-2.000px;left:1975.70px;">100%</span>
<div style="position:absolute;left:526.00px;top:454.00px;width:1512.00px;height:13.00px;background:#18181b;border-radius:7px;"></div>
<div style="position:absolute;left:525.5px;top:496px;width:1512.0px;height:1400px;border:1px solid #e5e7eb;box-sizing:border-box;border-radius:14px;background:#fff"></div>
<span id="t47" style="position:absolute;top:514.07px;font-size:22.5px;line-height:22.5px;color:#6b7280;white-space:nowrap;will-change:transform;letter-spacing:-0.822px;-webkit-text-stroke:0.25px #6b7280;left:553.80px;">File</span>
<span id="t48" style="position:absolute;top:514.07px;font-size:22.5px;line-height:22.5px;color:#6b7280;white-space:nowrap;will-change:transform;letter-spacing:-0.382px;-webkit-text-stroke:0.25px #6b7280;left:1020.60px;">Vendor</span>
<span id="t49" style="position:absolute;top:514.07px;font-size:22.5px;line-height:22.5px;color:#6b7280;white-space:nowrap;will-change:transform;letter-spacing:-1.110px;-webkit-text-stroke:0.25px #6b7280;left:1487.00px;">Date</span>
<span id="t50" style="position:absolute;top:514.07px;font-size:22.5px;line-height:22.5px;color:#6b7280;white-space:nowrap;will-change:transform;letter-spacing:-0.429px;-webkit-text-stroke:0.25px #6b7280;left:1762.80px;">Amount</span>
<span id="t51" style="position:absolute;top:514.07px;font-size:22.5px;line-height:22.5px;color:#6b7280;white-space:nowrap;will-change:transform;letter-spacing:-0.519px;-webkit-text-stroke:0.25px #6b7280;left:1948.00px;">Status</span>
<div style="position:absolute;left:526.50px;top:552px;width:1510.00px;height:1px;background:#e5e7eb"></div>
<svg style="position:absolute;left:555.30px;top:591.80px;" width="27.40" height="27.40" viewBox="0 0 24 24" fill="none" stroke="#6b7280" stroke-width="2" stroke-linecap="round" stroke-linejoin="round"><path d="m6 9 6 6 6-6"/></svg>
<span id="t52" style="position:absolute;top:578.23px;font-size:25.5px;line-height:25.5px;color:#0a0a0a;white-space:nowrap;will-change:transform;letter-spacing:0.262px;-webkit-text-stroke:0.25px #0a0a0a;left:594.80px;">tesco-20260412-7179.jpg</span>
<span id="t53" style="position:absolute;top:610.90px;font-size:22px;line-height:22px;color:#6b7280;white-space:nowrap;will-change:transform;letter-spacing:-0.431px;left:594.80px;">252.6 KB</span>
<span id="t54" style="position:absolute;top:592.90px;font-size:26px;line-height:26px;color:#0a0a0a;white-space:nowrap;will-change:transform;letter-spacing:-0.405px;left:1021.10px;">Tesco</span>
<span id="t55" style="position:absolute;top:595.58px;font-size:22.5px;line-height:22.5px;color:#0a0a0a;white-space:nowrap;will-change:transform;letter-spacing:0.112px;left:1487.00px;">2026-04-12</span>
<span id="t56" style="position:absolute;top:593.03px;font-size:25.5px;line-height:25.5px;color:#0a0a0a;white-space:nowrap;will-change:transform;letter-spacing:0.320px;-webkit-text-stroke:0.75px #0a0a0a;left:1758.60px;">£22.08</span>
<div style="position:absolute;left:1862.40px;top:586.20px;width:145.60px;height:37.00px;background:#18181b;border-radius:9px;box-shadow:0 1px 2px rgba(0,0,0,0.15);"></div>
<span id="t57" style="position:absolute;top:594.85px;font-size:21px;line-height:21px;color:#fff;white-space:nowrap;will-change:transform;letter-spacing:0.855px;-webkit-text-stroke:0.62px #fff;left:1880.30px;">Completed</span>
<div style="position:absolute;left:526.50px;top:657px;width:1510.00px;height:1px;background:#e5e7eb"></div>
<div style="position:absolute;left:526.50px;top:658.60px;width:1510.00px;height:482.60px;background:#fbfbfc;"></div>
<span id="t58" style="position:absolute;top:676.70px;font-size:26px;line-height:26px;color:#6b7280;white-space:nowrap;will-change:transform;letter-spacing:-0.393px;left:553.80px;">Subtotal:</span>
<span id="t59" style="position:absolute;top:676.70px;font-size:26px;line-height:26px;color:#0a0a0a;white-space:nowrap;will-change:transform;letter-spacing:-0.646px;-webkit-text-stroke:0.30px #0a0a0a;left:662.20px;">£18.40</span>
<span id="t60" style="position:absolute;top:676.70px;font-size:26px;line-height:26px;color:#6b7280;white-space:nowrap;will-change:transform;letter-spacing:-0.796px;left:1052.70px;">Tax:</span>
<span id="t61" style="position:absolute;top:676.70px;font-size:26px;line-height:26px;color:#0a0a0a;white-space:nowrap;will-change:transform;letter-spacing:0.105px;-webkit-text-stroke:0.30px #0a0a0a;left:1106.40px;">£3.68</span>
<span id="t62" style="position:absolute;top:676.70px;font-size:26px;line-height:26px;color:#6b7280;white-space:nowrap;will-change:transform;letter-spacing:-0.775px;left:1550.80px;">Payment:</span>
<span id="t63" style="position:absolute;top:676.70px;font-size:26px;line-height:26px;color:#0a0a0a;white-space:nowrap;will-change:transform;letter-spacing:-0.720px;-webkit-text-stroke:0.30px #0a0a0a;left:1664.00px;">Card</span>
<span id="t64" style="position:absolute;top:725.00px;font-size:26px;line-height:26px;color:#6b7280;white-space:nowrap;will-change:transform;letter-spacing:-0.453px;left:553.80px;">Receipt #:</span>
<span id="t65" style="position:absolute;top:725.00px;font-size:26px;line-height:26px;color:#0a0a0a;white-space:nowrap;will-change:transform;letter-spacing:-1.312px;-webkit-text-stroke:0.30px #0a0a0a;left:675.80px;">TE-18671</span>
<span id="t66" style="position:absolute;top:778.25px;font-size:23px;line-height:23px;color:#6b7280;white-space:nowrap;will-change:transform;letter-spacing:-0.679px;-webkit-text-stroke:0.25px #6b7280;left:553.80px;">Line Items</span>
<div style="position:absolute;left:556.00px;top:814.00px;width:1451.50px;height:298.80px;background:#fdfdfe;border:1px solid #e5e7eb;border-radius:14px;box-sizing:border-box;"></div>
<span id="t67" style="position:absolute;top:828.67px;font-size:22.5px;line-height:22.5px;color:#6b7280;white-space:nowrap;will-change:transform;letter-spacing:-0.085px;-webkit-text-stroke:0.25px #6b7280;left:576.20px;">Description</span>
<span id="t68" style="position:absolute;top:828.67px;font-size:22.5px;line-height:22.5px;color:#6b7280;white-space:nowrap;will-change:transform;letter-spacing:-0.758px;-webkit-text-stroke:0.25px #6b7280;left:1685.40px;">Qty</span>
<span id="t69" style="position:absolute;top:828.67px;font-size:22.5px;line-height:22.5px;color:#6b7280;white-space:nowrap;will-change:transform;letter-spacing:-0.381px;-webkit-text-stroke:0.25px #6b7280;left:1758.80px;">Unit Price</span>
<span id="t70" style="position:absolute;top:828.67px;font-size:22.5px;line-height:22.5px;color:#6b7280;white-space:nowrap;will-change:transform;letter-spacing:-0.208px;-webkit-text-stroke:0.25px #6b7280;left:1940.00px;">Total</span>
<div style="position:absolute;left:557.00px;top:863px;width:1449.50px;height:1px;background:#e5e7eb"></div>
<div style="position:absolute;left:557.00px;top:913px;width:1449.50px;height:1px;background:#e5e7eb"></div>
<div style="position:absolute;left:557.00px;top:963px;width:1449.50px;height:1px;background:#e5e7eb"></div>
<div style="position:absolute;left:557.00px;top:1013px;width:1449.50px;height:1px;background:#e5e7eb"></div>
<div style="position:absolute;left:557.00px;top:1063px;width:1449.50px;height:1px;background:#e5e7eb"></div>
<span id="t71" style="position:absolute;top:877.17px;font-size:22.5px;line-height:22.5px;color:#0a0a0a;white-space:nowrap;will-change:transform;letter-spacing:-0.351px;left:576.20px;">Semi-skimmed milk</span>
<span id="t72" style="position:absolute;top:877.17px;font-size:22.5px;line-height:22.5px;color:#0a0a0a;white-space:nowrap;will-change:transform;left:1706.38px;">2</span>
<span id="t73" style="position:absolute;top:877.17px;font-size:22.5px;line-height:22.5px;color:#0a0a0a;white-space:nowrap;will-change:transform;left:1796.59px;">£1.25</span>
<span id="t74" style="position:absolute;top:877.17px;font-size:22.5px;line-height:22.5px;color:#0a0a0a;white-space:nowrap;will-change:transform;left:1930.39px;">£2.50</span>
<span id="t75" style="position:absolute;top:927.38px;font-size:22.5px;line-height:22.5px;color:#0a0a0a;white-space:nowrap;will-change:transform;letter-spacing:-0.496px;left:576.20px;">Wholemeal bread</span>
<span id="t76" style="position:absolute;top:927.38px;font-size:22.5px;line-height:22.5px;color:#0a0a0a;white-space:nowrap;will-change:transform;left:1706.38px;">1</span>
<span id="t77" style="position:absolute;top:927.38px;font-size:22.5px;line-height:22.5px;color:#0a0a0a;white-space:nowrap;will-change:transform;left:1796.59px;">£1.45</span>
<span id="t78" style="position:absolute;top:927.38px;font-size:22.5px;line-height:22.5px;color:#0a0a0a;white-space:nowrap;will-change:transform;left:1930.39px;">£1.45</span>
<span id="t79" style="position:absolute;top:976.77px;font-size:22.5px;line-height:22.5px;color:#0a0a0a;white-space:nowrap;will-change:transform;letter-spacing:-0.224px;left:576.20px;">Chicken breast fillets</span>
<span id="t80" style="position:absolute;top:976.77px;font-size:22.5px;line-height:22.5px;color:#0a0a0a;white-space:nowrap;will-change:transform;left:1706.38px;">1</span>
<span id="t81" style="position:absolute;top:976.77px;font-size:22.5px;line-height:22.5px;color:#0a0a0a;white-space:nowrap;will-change:transform;left:1796.59px;">£6.95</span>
<span id="t82" style="position:absolute;top:976.77px;font-size:22.5px;line-height:22.5px;color:#0a0a0a;white-space:nowrap;will-change:transform;left:1930.39px;">£6.95</span>
<span id="t83" style="position:absolute;top:1026.77px;font-size:22.5px;line-height:22.5px;color:#0a0a0a;white-space:nowrap;will-change:transform;letter-spacing:-0.064px;left:576.20px;">Mixed fruit pack</span>
<span id="t84" style="position:absolute;top:1026.77px;font-size:22.5px;line-height:22.5px;color:#0a0a0a;white-space:nowrap;will-change:transform;left:1706.38px;">1</span>
<span id="t85" style="position:absolute;top:1026.77px;font-size:22.5px;line-height:22.5px;color:#0a0a0a;white-space:nowrap;will-change:transform;left:1796.59px;">£3.20</span>
<span id="t86" style="position:absolute;top:1026.77px;font-size:22.5px;line-height:22.5px;color:#0a0a0a;white-space:nowrap;will-change:transform;left:1930.39px;">£3.20</span>
<span id="t87" style="position:absolute;top:1076.67px;font-size:22.5px;line-height:22.5px;color:#0a0a0a;white-space:nowrap;will-change:transform;letter-spacing:-0.274px;left:576.20px;">Ground coffee</span>
<span id="t88" style="position:absolute;top:1076.67px;font-size:22.5px;line-height:22.5px;color:#0a0a0a;white-space:nowrap;will-change:transform;left:1706.38px;">1</span>
<span id="t89" style="position:absolute;top:1076.67px;font-size:22.5px;line-height:22.5px;color:#0a0a0a;white-space:nowrap;will-change:transform;left:1796.59px;">£4.30</span>
<span id="t90" style="position:absolute;top:1076.67px;font-size:22.5px;line-height:22.5px;color:#0a0a0a;white-space:nowrap;will-change:transform;left:1930.39px;">£4.30</span>
<div style="position:absolute;left:526.50px;top:1141px;width:1510.00px;height:1px;background:#e5e7eb"></div>
<svg style="position:absolute;left:555.30px;top:1180.80px;" width="27.40" height="27.40" viewBox="0 0 24 24" fill="none" stroke="#6b7280" stroke-width="2" stroke-linecap="round" stroke-linejoin="round"><path d="m9 18 6-6-6-6"/></svg>
<span id="t91" style="position:absolute;top:1167.23px;font-size:25.5px;line-height:25.5px;color:#0a0a0a;white-space:nowrap;will-change:transform;letter-spacing:0.748px;-webkit-text-stroke:0.25px #0a0a0a;left:594.80px;">amazon-20260403-4743.jpg</span>
<span id="t92" style="position:absolute;top:1199.90px;font-size:22px;line-height:22px;color:#6b7280;white-space:nowrap;will-change:transform;letter-spacing:-0.959px;left:594.80px;">331.3 KB</span>
<span id="t93" style="position:absolute;top:1181.90px;font-size:26px;line-height:26px;color:#0a0a0a;white-space:nowrap;will-change:transform;letter-spacing:-0.978px;left:1021.10px;">Amazon</span>
<span id="t94" style="position:absolute;top:1184.58px;font-size:22.5px;line-height:22.5px;color:#0a0a0a;white-space:nowrap;will-change:transform;letter-spacing:0.623px;left:1487.00px;">2026-04-03</span>
<span id="t95" style="position:absolute;top:1182.03px;font-size:25.5px;line-height:25.5px;color:#0a0a0a;white-space:nowrap;will-change:transform;letter-spacing:0.720px;-webkit-text-stroke:0.75px #0a0a0a;left:1756.60px;">£38.48</span>
<div style="position:absolute;left:1862.40px;top:1175.20px;width:145.60px;height:37.00px;background:#18181b;border-radius:9px;box-shadow:0 1px 2px rgba(0,0,0,0.15);"></div>
<span id="t96" style="position:absolute;top:1183.85px;font-size:21px;line-height:21px;color:#fff;white-space:nowrap;will-change:transform;letter-spacing:0.855px;-webkit-text-stroke:0.62px #fff;left:1880.30px;">Completed</span>
<div style="position:absolute;left:526.50px;top:1246px;width:1510.00px;height:1px;background:#e5e7eb"></div>
<svg style="position:absolute;left:555.30px;top:1285.40px;" width="27.40" height="27.40" viewBox="0 0 24 24" fill="none" stroke="#6b7280" stroke-width="2" stroke-linecap="round" stroke-linejoin="round"><path d="m9 18 6-6-6-6"/></svg>
<span id="t97" style="position:absolute;top:1271.83px;font-size:25.5px;line-height:25.5px;color:#0a0a0a;white-space:nowrap;will-change:transform;letter-spacing:0.671px;-webkit-text-stroke:0.25px #0a0a0a;left:594.80px;">sainsburys-20260412-9834.pdf</span>
<span id="t98" style="position:absolute;top:1304.50px;font-size:22px;line-height:22px;color:#6b7280;white-space:nowrap;will-change:transform;letter-spacing:-1.517px;left:594.80px;">274.1 KB</span>
<span id="t99" style="position:absolute;top:1286.50px;font-size:26px;line-height:26px;color:#0a0a0a;white-space:nowrap;will-change:transform;letter-spacing:-0.458px;left:1021.10px;">Sainsburys</span>
<span id="t100" style="position:absolute;top:1289.17px;font-size:22.5px;line-height:22.5px;color:#0a0a0a;white-space:nowrap;will-change:transform;letter-spacing:0.134px;left:1487.00px;">2026-04-12</span>
<span id="t101" style="position:absolute;top:1286.62px;font-size:25.5px;line-height:25.5px;color:#0a0a0a;white-space:nowrap;will-change:transform;letter-spacing:-1.180px;-webkit-text-stroke:0.75px #0a0a0a;left:1766.10px;">£35.15</span>
<div style="position:absolute;left:1862.40px;top:1279.80px;width:145.60px;height:37.00px;background:#18181b;border-radius:9px;box-shadow:0 1px 2px rgba(0,0,0,0.15);"></div>
<span id="t102" style="position:absolute;top:1288.45px;font-size:21px;line-height:21px;color:#fff;white-space:nowrap;will-change:transform;letter-spacing:0.855px;-webkit-text-stroke:0.62px #fff;left:1880.30px;">Completed</span>
<div style="position:absolute;left:526.50px;top:1350px;width:1510.00px;height:1px;background:#e5e7eb"></div>
<svg style="position:absolute;left:555.30px;top:1389.80px;" width="27.40" height="27.40" viewBox="0 0 24 24" fill="none" stroke="#6b7280" stroke-width="2" stroke-linecap="round" stroke-linejoin="round"><path d="m9 18 6-6-6-6"/></svg>
<span id="t103" style="position:absolute;top:1376.23px;font-size:25.5px;line-height:25.5px;color:#0a0a0a;white-space:nowrap;will-change:transform;letter-spacing:0.598px;-webkit-text-stroke:0.25px #0a0a0a;left:594.80px;">premier-inn-20260407-6122.jpg</span>
<span id="t104" style="position:absolute;top:1408.90px;font-size:22px;line-height:22px;color:#6b7280;white-space:nowrap;will-change:transform;letter-spacing:-0.874px;left:594.80px;">134.9 KB</span>
<span id="t105" style="position:absolute;top:1390.90px;font-size:26px;line-height:26px;color:#0a0a0a;white-space:nowrap;will-change:transform;letter-spacing:-0.679px;left:1021.10px;">Premier Inn</span>
<span id="t106" style="position:absolute;top:1393.58px;font-size:22.5px;line-height:22.5px;color:#0a0a0a;white-space:nowrap;will-change:transform;letter-spacing:0.523px;left:1487.00px;">2026-04-07</span>
<span id="t107" style="position:absolute;top:1391.03px;font-size:25.5px;line-height:25.5px;color:#0a0a0a;white-space:nowrap;will-change:transform;letter-spacing:-0.298px;-webkit-text-stroke:0.75px #0a0a0a;left:1747.80px;">£210.38</span>
<div style="position:absolute;left:1862.40px;top:1384.20px;width:145.60px;height:37.00px;background:#18181b;border-radius:9px;box-shadow:0 1px 2px rgba(0,0,0,0.15);"></div>
<span id="t108" style="position:absolute;top:1392.85px;font-size:21px;line-height:21px;color:#fff;white-space:nowrap;will-change:transform;letter-spacing:0.855px;-webkit-text-stroke:0.62px #fff;left:1880.30px;">Completed</span>
<div style="position:absolute;left:526.50px;top:1456px;width:1510.00px;height:1px;background:#e5e7eb"></div>
<svg style="position:absolute;left:555.30px;top:1497.60px;" width="27.40" height="27.40" viewBox="0 0 24 24" fill="none" stroke="#6b7280" stroke-width="2" stroke-linecap="round" stroke-linejoin="round"><path d="m9 18 6-6-6-6"/></svg>
<span id="t109" style="position:absolute;top:1484.03px;font-size:25.5px;line-height:25.5px;color:#0a0a0a;white-space:nowrap;will-change:transform;-webkit-text-stroke:0.25px #0a0a0a;letter-spacing:0.5px;left:594.80px;">bp-20260331-5884.png</span>
<span id="t110" style="position:absolute;top:1516.70px;font-size:22px;line-height:22px;color:#6b7280;white-space:nowrap;will-change:transform;letter-spacing:0.286px;left:594.80px;">98.2 KB</span>
<span id="t111" style="position:absolute;top:1498.70px;font-size:26px;line-height:26px;color:#0a0a0a;white-space:nowrap;will-change:transform;letter-spacing:-3.000px;left:1021.10px;">BP</span>
<span id="t112" style="position:absolute;top:1501.38px;font-size:22.5px;line-height:22.5px;color:#0a0a0a;white-space:nowrap;will-change:transform;letter-spacing:0.545px;left:1487.00px;">2026-03-31</span>
<span id="t113" style="position:absolute;top:1498.83px;font-size:25.5px;line-height:25.5px;color:#0a0a0a;white-space:nowrap;will-change:transform;letter-spacing:0.400px;-webkit-text-stroke:0.75px #0a0a0a;left:1758.20px;">£45.00</span>
<div style="position:absolute;left:1862.40px;top:1492.00px;width:145.60px;height:37.00px;background:#18181b;border-radius:9px;box-shadow:0 1px 2px rgba(0,0,0,0.15);"></div>
<span id="t114" style="position:absolute;top:1500.65px;font-size:21px;line-height:21px;color:#fff;white-space:nowrap;will-change:transform;letter-spacing:0.855px;-webkit-text-stroke:0.62px #fff;left:1880.30px;">Completed</span>
</div>
</body></html>
